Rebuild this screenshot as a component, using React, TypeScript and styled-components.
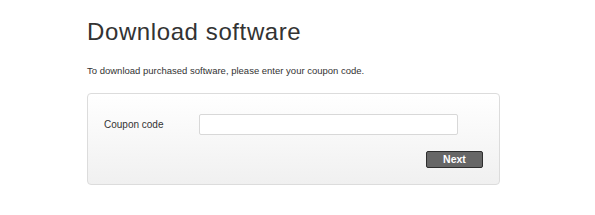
import React, { FC } from "react";
import styled, { createGlobalStyle } from "styled-components";

const GlobalStyle = createGlobalStyle`
  body {
    margin: 0;
    background: #fff;
    font-family: "Liberation Sans", Arial, sans-serif;
    color: #333;
  }
`;

const Page = styled.div`
  width: 595px;
  padding: 16px 0 0 87px;
  box-sizing: border-box;
`;

const Title = styled.h1`
  margin: 0;
  font-size: 24px;
  font-weight: normal;
  line-height: 32px;
  color: #333;
  letter-spacing: 0.6px;
`;

const Intro = styled.p`
  margin: 17px 0 0;
  font-size: 9.5px;
  line-height: 12px;
  color: #333;
`;

const Panel = styled.form`
  margin-top: 16px;
  width: 413px;
  height: 92px;
  box-sizing: border-box;
  border: 1px solid #dcdcdc;
  border-radius: 4px;
  background: linear-gradient(#ffffff, #f0f0f0);
  padding: 20px 16px 0 16px;
  display: flex;
  flex-direction: column;
`;

const Row = styled.div`
  display: flex;
  align-items: center;
`;

const Label = styled.label`
  width: 95px;
  font-size: 10px;
  color: #333;
`;

const Input = styled.input`
  width: 259px;
  height: 21px;
  box-sizing: border-box;
  border: 1px solid #d8d8d8;
  border-radius: 2px;
  background: #fff;
  outline: none;
`;

const Actions = styled.div`
  display: flex;
  justify-content: flex-end;
  margin-top: 16px;
`;

const Button = styled.button`
  width: 57px;
  height: 17px;
  padding: 0;
  border: 1px solid #2e2e2e;
  border-radius: 2px;
  background: #666;
  color: #fff;
  font-family: "Liberation Sans", Arial, sans-serif;
  font-weight: bold;
  font-size: 10.5px;
  line-height: 15px;
  cursor: pointer;
`;

const App: FC = () => {
  return (
    <>
      <GlobalStyle />
      <Page>
        <Title>Download software</Title>
        <Intro>To download purchased software, please enter your coupon code.</Intro>
        <Panel onSubmit={(e) => e.preventDefault()}>
          <Row>
            <Label htmlFor="coupon">Coupon code</Label>
            <Input id="coupon" type="text" />
          </Row>
          <Actions>
            <Button type="submit">Next</Button>
          </Actions>
        </Panel>
      </Page>
    </>
  );
};

export default App;
